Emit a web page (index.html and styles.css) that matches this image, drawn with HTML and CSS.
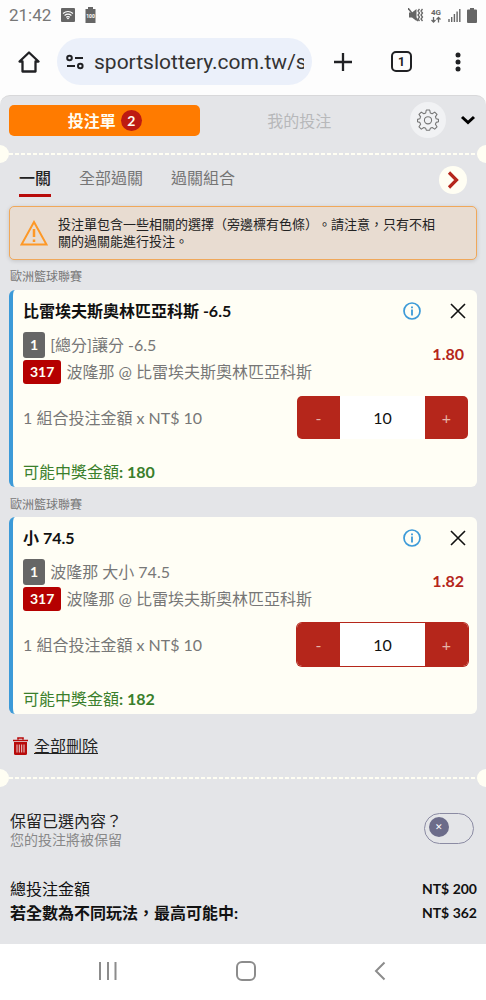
FILE: index.html
```html
<!DOCTYPE html>
<html lang="zh-Hant">
<head>
    <meta charset="UTF-8">
    <meta name="viewport" content="width=device-width, initial-scale=1.0">
    <title>投注單</title>
    <link rel="stylesheet" href="styles.css">
</head>
<body>
    <div class="status-bar">
        <span class="clock">21:42</span>
        <svg class="status-wifi" width="14" height="14" viewBox="0 0 14 14">
            <rect width="14" height="14" rx="1" fill="#666"/>
            <path d="M2 5.500Q7 1.500 12 5.500M3.600 7.500Q7 4.800 10.400 7.500M5.200 9.300Q7 8 8.800 9.300" fill="none" stroke="#fff" stroke-width="1.100"/>
            <path d="M5.600 10L7 11.600L8.400 10Z" fill="#fff"/>
        </svg>
        <svg class="status-full" width="11" height="16" viewBox="0 0 11 16">
            <path d="M3 0h5v2h2.500v14H.5V2H3z" fill="#666"/>
            <text x="5.500" y="11" text-anchor="middle" class="battery-text">100</text>
        </svg>
        <div class="status-right">
            <svg width="16" height="14" viewBox="0 0 16 14">
                <path d="M1 4.500h3L8.500 1v12L4 9.500H1z" fill="#666"/>
                <path d="M0 0L10 13" stroke="#666" stroke-width="1.500"/>
                <path d="M11.500 1l-1.500 2 1.500 2-1.500 2 1.500 2-1.500 2 1.500 2M14.500 1L13 3l1.500 2L13 7l1.500 2-1.500 2 1.500 2" fill="none" stroke="#666" stroke-width="1.300"/>
            </svg>
            <svg width="12" height="15" viewBox="0 0 12 15">
                <text x="6" y="7" text-anchor="middle" class="network-text">4G</text>
                <path d="M3.500 9v5M1.500 12l2 2 2-2M8.500 14.500v-5M6.500 11.500l2-2 2 2" fill="none" stroke="#666" stroke-width="1.300"/>
            </svg>
            <svg width="13" height="14" viewBox="0 0 13 14">
                <path d="M1 11v3M3.700 9v5M6.400 6v8M9.100 3.500V14M11.800 1v13" stroke="#666" stroke-width="1.400"/>
            </svg>
            <svg width="10" height="15" viewBox="0 0 10 15">
                <path d="M3 0h4v1.500h2q1 0 1 1V14q0 1-1 1H1q-1 0-1-1V2.500q0-1 1-1h2z" fill="#666"/>
            </svg>
        </div>
    </div>

    <header class="browser-bar">
        <button class="icon-btn" aria-label="Home">
            <svg width="22" height="22" viewBox="0 0 22 22" fill="none" stroke="#202124" stroke-width="2.300" stroke-linejoin="round">
                <path d="M1.500 10.500L11 1.500l9.500 9H17.500V20.500h-13V10.500z"/>
            </svg>
        </button>
        <div class="address">
            <svg width="18" height="16" viewBox="0 0 18 16" fill="none" stroke="#202124" stroke-width="2">
                <circle cx="3.500" cy="4" r="2.300"/>
                <path d="M9 4h8M1 12h8"/>
                <circle cx="14.300" cy="12" r="2.300"/>
            </svg>
            <input type="text" value="sportslottery.com.tw/s" aria-label="URL">
        </div>
        <button class="icon-btn" aria-label="New tab">
            <svg width="20" height="20" viewBox="0 0 20 20"><path d="M10 1v18M1 10h18" stroke="#202124" stroke-width="2.300"/></svg>
        </button>
        <button class="tab-count">1</button>
        <button class="icon-btn" aria-label="Menu">
            <svg width="6" height="20" viewBox="0 0 6 20" fill="#202124">
                <circle cx="3" cy="3" r="2.500"/><circle cx="3" cy="10" r="2.500"/><circle cx="3" cy="17" r="2.500"/>
            </svg>
        </button>
    </header>

    <main class="slip">
        <div class="slip-head">
            <button class="slip-tab active">投注單 <span class="count">2</span></button>
            <button class="slip-tab">我的投注</button>
            <button class="settings" aria-label="設定">
                <svg width="22" height="22" viewBox="0 0 22 22" fill="none" stroke="#777" stroke-width="1.100" stroke-linejoin="round">
                    <path d="M9.300 1h3.400l.6 2.900 1.900.8 2.500-1.600 2.300 2.300-1.600 2.500.8 1.900 2.300.6v2.400l-2.300.6-.8 1.900 1.600 2.500-2.300 2.300-2.500-1.600-1.900.8-.6 1.900H9.300l-.6-1.900-1.900-.8-2.500 1.600L2 17.800l1.600-2.500-.8-1.900-2.300-.6v-2.400l2.300-.6.8-1.900L2 5.400l2.300-2.300 2.500 1.600 1.900-.8z"/>
                    <circle cx="11" cy="11.300" r="3.600"/>
                </svg>
            </button>
            <button class="icon-btn" aria-label="收合">
                <svg width="16" height="10" viewBox="0 0 16 10"><path d="M2 2l6 5.500L14 2" fill="none" stroke="#000" stroke-width="3"/></svg>
            </button>
        </div>
        <div class="perforation"></div>

        <nav class="bet-types">
            <a href="#" class="active">一關</a>
            <a href="#">全部過關</a>
            <a href="#">過關組合</a>
            <button class="next" aria-label="下一頁">
                <svg width="14" height="18" viewBox="0 0 14 18"><path d="M3 1.500L10.500 9 3 16.500" fill="none" stroke="#b5261b" stroke-width="3.200"/></svg>
            </button>
        </nav>

        <div class="alert">
            <svg width="28" height="26" viewBox="0 0 28 26">
                <path d="M14 2L26.500 24.500h-25z" fill="none" stroke="#fd9827" stroke-width="2"/>
                <path d="M14 9v8M14 19.500v2.500" stroke="#fd9827" stroke-width="2.500"/>
            </svg>
            <p>投注單包含一些相關的選擇（旁邊標有色條）。請注意，只有不相關的過關能進行投注。</p>
        </div>

        <h2 class="league">歐洲籃球聯賽</h2>
        <section class="bet">
            <div class="bet-title">
                <h3>比雷埃夫斯奧林匹亞科斯 -6.5</h3>
                <button class="icon-btn" aria-label="資訊">
                    <svg width="18" height="18" viewBox="0 0 18 18"><circle cx="9" cy="9" r="8" fill="none" stroke="#3c9ad8" stroke-width="1.700"/><path d="M9 7.500v6M9 4.500v1.700" stroke="#3c9ad8" stroke-width="1.800"/></svg>
                </button>
                <button class="icon-btn" aria-label="移除">
                    <svg width="16" height="16" viewBox="0 0 16 16"><path d="M1 1l14 14M15 1L1 15" stroke="#111" stroke-width="1.600"/></svg>
                </button>
            </div>
            <div class="bet-info">
                <div>
                    <p class="market"><span class="tag">1</span>[總分]讓分 -6.5</p>
                    <p class="match"><span class="tag red">317</span>波隆那 @ 比雷埃夫斯奧林匹亞科斯</p>
                </div>
                <strong class="odds">1.80</strong>
            </div>
            <div class="stake">
                <label for="stake1">1 組合投注金額 x NT$ 10</label>
                <div class="stepper">
                    <button>-</button>
                    <input type="text" id="stake1" value="10">
                    <button>+</button>
                </div>
            </div>
            <p class="win">可能中獎金額<b>: 180</b></p>
        </section>

        <h2 class="league">歐洲籃球聯賽</h2>
        <section class="bet">
            <div class="bet-title">
                <h3>小 74.5</h3>
                <button class="icon-btn" aria-label="資訊">
                    <svg width="18" height="18" viewBox="0 0 18 18"><circle cx="9" cy="9" r="8" fill="none" stroke="#3c9ad8" stroke-width="1.700"/><path d="M9 7.500v6M9 4.500v1.700" stroke="#3c9ad8" stroke-width="1.800"/></svg>
                </button>
                <button class="icon-btn" aria-label="移除">
                    <svg width="16" height="16" viewBox="0 0 16 16"><path d="M1 1l14 14M15 1L1 15" stroke="#111" stroke-width="1.600"/></svg>
                </button>
            </div>
            <div class="bet-info">
                <div>
                    <p class="market"><span class="tag">1</span>波隆那 大小 74.5</p>
                    <p class="match"><span class="tag red">317</span>波隆那 @ 比雷埃夫斯奧林匹亞科斯</p>
                </div>
                <strong class="odds">1.82</strong>
            </div>
            <div class="stake">
                <label for="stake2">1 組合投注金額 x NT$ 10</label>
                <div class="stepper outlined">
                    <button>-</button>
                    <input type="text" id="stake2" value="10">
                    <button>+</button>
                </div>
            </div>
            <p class="win">可能中獎金額<b>: 182</b></p>
        </section>

        <a href="#" class="clear-all">
            <svg width="15" height="18" viewBox="0 0 15 18">
                <path d="M5 2.500V1h5v1.500M0 3.500h15" fill="none" stroke="#b80b0b" stroke-width="1.600"/>
                <path d="M1 5h13v11.500q0 1.500-1.500 1.500h-10Q1 18 1 16.500z" fill="#b80b0b"/>
                <path d="M4 7.500v8M6.300 7.500v8M8.700 7.500v8M11 7.500v8" stroke="#e9cfd0" stroke-width="1"/>
            </svg>
            <span>全部刪除</span>
        </a>
        <div class="perforation"></div>

        <div class="keep">
            <label for="keep">保留已選內容？<small>您的投注將被保留</small></label>
            <input type="checkbox" id="keep" class="toggle">
        </div>

        <dl class="totals">
            <div>
                <dt>總投注金額</dt>
                <dd>NT$ 200</dd>
            </div>
            <div class="max">
                <dt>若全數為不同玩法，最高可能中:</dt>
                <dd>NT$ 362</dd>
            </div>
        </dl>
    </main>

    <footer class="system-nav">
        <button class="icon-btn" aria-label="Recents">
            <svg width="20" height="20" viewBox="0 0 20 20"><path d="M2 1v18M10 1v18M17.500 1v18" stroke="#8c8c8c" stroke-width="2"/></svg>
        </button>
        <button class="icon-btn" aria-label="Home">
            <svg width="20" height="20" viewBox="0 0 20 20"><rect x="1" y="1" width="18" height="18" rx="5" fill="none" stroke="#8c8c8c" stroke-width="2"/></svg>
        </button>
        <button class="icon-btn" aria-label="Back">
            <svg width="12" height="20" viewBox="0 0 12 20"><path d="M10.500 1.500L2 10l8.500 8.500" fill="none" stroke="#8c8c8c" stroke-width="2"/></svg>
        </button>
    </footer>
</body>
</html>
```
FILE: styles.css
```css
* {
    box-sizing: border-box;
}
body {
    margin: 0;
    min-height: 100vh;
    display: flex;
    flex-direction: column;
    font-family: Lato, "Noto Sans CJK TC", sans-serif;
    font-size: 16px;
    line-height: 24px;
    color: #222;
    background: #fdfdfd;
}
h2, h3, p, dl, dd {
    margin: 0;
}
svg {
    display: block;
    flex-shrink: 0;
}
button, input {
    font-family: inherit;
    font-size: inherit;
    color: inherit;
}
button {
    padding: 0;
    border: none;
    background: none;
    cursor: pointer;
}
.icon-btn {
    display: flex;
    align-items: center;
    justify-content: center;
    flex-shrink: 0;
}

/* phone status bar */
.status-bar {
    display: flex;
    align-items: center;
    height: 30px;
    padding: 0 9px;
    font-family: Roboto, sans-serif;
    font-size: 17px;
    color: #777;
}
.status-wifi, .status-full {
    margin-left: 10px;
}
.battery-text {
    font: bold 5px Roboto, sans-serif;
    fill: #fff;
}
.network-text {
    font: bold 8px Roboto, sans-serif;
    fill: #666;
}
.status-right {
    display: flex;
    align-items: center;
    gap: 6px;
    margin-left: auto;
}

/* browser toolbar */
.browser-bar {
    display: flex;
    align-items: center;
    height: 65px;
    padding: 0 25px 2px 18px;
    font-family: Roboto, sans-serif;
}
.address {
    display: flex;
    align-items: center;
    gap: 10px;
    flex: 1;
    min-width: 0;
    height: 47px;
    margin: 0 21px 0 17px;
    padding: 0 8px 0 9px;
    border-radius: 24px;
    background: #ebf0fa;
}
.address input {
    flex: 1;
    min-width: 0;
    padding: 0;
    border: none;
    background: none;
    font-size: 21px;
    color: #333;
}
.tab-count {
    flex-shrink: 0;
    width: 21px;
    height: 21px;
    margin: 0 43px 0 38px;
    border: 2px solid #202124;
    border-radius: 5px;
    font-size: 12px;
    font-weight: bold;
    line-height: 16px;
}

/* bet slip */
.slip {
    flex: 1;
    border-top: 1px solid #d8d8da;
    border-radius: 10px 10px 0 0;
    background: #e4e5e8;
    overflow: hidden;
}
.slip-head {
    display: flex;
    align-items: center;
    height: 48px;
    padding: 0 10px 0 9px;
}
.slip-tab {
    display: flex;
    align-items: center;
    justify-content: center;
    gap: 5px;
    flex: 1;
    height: 31px;
    border-radius: 5px;
    color: #b7b8ba;
}
.slip-tab.active {
    flex: 0 0 41%;
    background: #ff7b00;
    color: #fffdf3;
    font-weight: bold;
}
.count {
    width: 21px;
    height: 21px;
    border-radius: 50%;
    background: #bd1a12;
    font-size: 14px;
    line-height: 21px;
}
.settings {
    display: flex;
    align-items: center;
    justify-content: center;
    width: 36px;
    height: 36px;
    margin: 0 14px 0 12px;
    border-radius: 50%;
    background: #f1f2f4;
}

/* dashed ticket edge with a notch at each end */
.perforation {
    display: flex;
    align-items: center;
    justify-content: space-between;
    height: 20px;
    margin: 0 -9px;
    background: repeating-linear-gradient(90deg, #fffef3 0 4px, transparent 4px 6px) center / 100% 2px no-repeat;
}
.perforation::before, .perforation::after {
    content: "";
    width: 18px;
    height: 18px;
    border-radius: 50%;
    background: #fffef3;
}

.bet-types {
    display: flex;
    align-items: flex-start;
    gap: 28px;
    height: 42px;
    padding: 2px 19px 0;
}
.bet-types a {
    height: 31px;
    color: #757575;
    text-decoration: none;
}
.bet-types a.active {
    border-bottom: 3px solid #b80b0b;
    color: #222;
    font-weight: 500;
}
.next {
    display: flex;
    align-items: center;
    justify-content: center;
    width: 28px;
    height: 28px;
    margin-left: auto;
    border-radius: 50%;
    background: #fffef3;
}

.alert {
    display: flex;
    align-items: center;
    gap: 10px;
    height: 54px;
    margin: 0 9px;
    padding: 0 30px 0 10px;
    border: 1px solid #f0a85a;
    border-radius: 5px;
    background: #e8dcd1;
    box-shadow: 0 1px 4px rgba(0, 0, 0, 0.15);
    font-size: 13px;
    line-height: 17px;
    text-spacing-trim: space-all;
}

.league {
    padding: 7px 10px 3px;
    font-size: 12px;
    font-weight: normal;
    line-height: 20px;
    color: #777;
}
.bet {
    margin: 0 9px;
    padding: 8px 9px 3px 10px;
    border-left: 4px solid #3c9ad8;
    border-radius: 6px;
    background: #fffef5;
}
.bet-title {
    display: flex;
    align-items: center;
    gap: 29px;
    height: 26px;
    padding-right: 2px;
}
.bet-title h3 {
    flex: 1;
    font-size: 16px;
    color: #111;
}
.bet-info {
    display: flex;
    align-items: center;
    justify-content: space-between;
    padding-top: 8px;
    color: #777;
}
.market, .match {
    display: flex;
    align-items: center;
    gap: 5px;
}
.match {
    margin-top: 2px;
}
.tag {
    padding: 0 7px;
    border-radius: 3px;
    background: #666;
    color: #fffef5;
    font-size: 14px;
    font-weight: bold;
    line-height: 26px;
}
.tag.red {
    background: #b50000;
    line-height: 24px;
}
.odds {
    padding: 0 4px 8px 0;
    color: #b5261b;
}
.stake {
    display: flex;
    align-items: center;
    justify-content: space-between;
    padding: 12px 0 21px;
    color: #777;
}
.stepper {
    display: flex;
    height: 43px;
    border-radius: 5px;
    overflow: hidden;
}
.stepper.outlined {
    box-shadow: 0 0 0 1px #b5261b;
}
.stepper button {
    width: 43px;
    background: #b5261b;
    color: #e6b4a8;
}
.stepper input {
    width: 85px;
    padding: 0;
    border: none;
    background: #fff;
    color: #111;
    text-align: center;
}
.win {
    color: #3a7f2b;
}
.bet + .league {
    padding-top: 8px;
    padding-bottom: 2px;
}

.clear-all {
    display: flex;
    align-items: center;
    gap: 6px;
    width: fit-content;
    margin: 20px 0 10px 13px;
    color: #222;
}

.keep {
    display: flex;
    align-items: center;
    justify-content: space-between;
    padding: 21px 12px 0 10px;
}
.keep small {
    display: block;
    font-size: 14px;
    line-height: 14px;
    color: #888;
}
.toggle {
    appearance: none;
    display: flex;
    align-items: center;
    width: 50px;
    height: 31px;
    margin: 0;
    padding: 0 4px 2px;
    border: 1px solid #8b8ba3;
    border-radius: 16px;
}
.toggle::before {
    content: "✕";
    width: 20px;
    height: 20px;
    border-radius: 50%;
    background: #6c6c8a;
    color: #fff;
    font-size: 9px;
    line-height: 20px;
    text-align: center;
}
.toggle:checked {
    justify-content: flex-end;
}

.totals {
    padding: 30px 9px 18px 10px;
    color: #111;
}
.totals div {
    display: flex;
    align-items: center;
    justify-content: space-between;
}
.totals dd {
    font-size: 14px;
    font-weight: bold;
}
.totals .max {
    font-weight: bold;
}

.system-nav {
    display: flex;
    align-items: center;
    justify-content: space-between;
    height: 56px;
    padding: 0 100px 3px 98px;
    background: #fff;
}
```
